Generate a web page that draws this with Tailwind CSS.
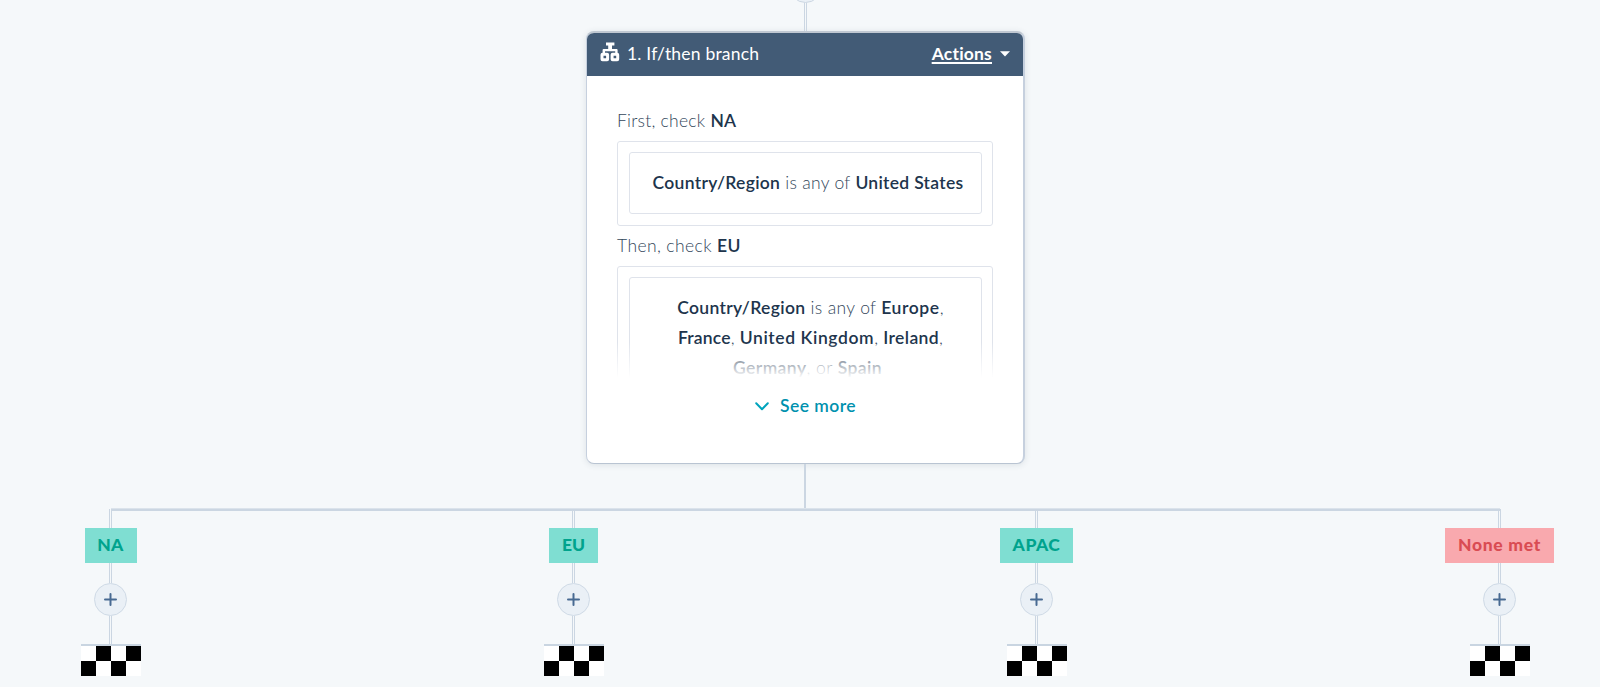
<!DOCTYPE html>
<html lang="en">
<head>
    <meta charset="UTF-8">
    <meta name="viewport" content="width=device-width, initial-scale=1.0">
    <title>Workflow</title>
    <script src="https://cdn.jsdelivr.net/npm/@tailwindcss/browser@4"></script>
</head>
<body class="bg-[#f5f8fa] h-[687px] overflow-hidden font-['Lato',sans-serif] text-[17.5px] leading-[30px] text-[#33475b]">

    <!-- connector from the previous step -->
    <div class="relative h-[31px]">
        <div class="absolute left-[789px] -top-[30px] w-[33px] h-[33px] rounded-full bg-[#eaf0f6] border border-[#cbd6e2]"></div>
        <div class="ml-[804px] pt-[3px] h-full w-[3px]">
            <div class="h-full border-x border-[#cbd6e2]"></div>
        </div>
    </div>

    <!-- if/then card -->
    <div class="ml-[586px] w-[439px] h-[433px] bg-white border border-t-2 border-r-2 border-[#c6d0de] border-b-[#b9c4d2] border-t-[#c0c8d2] rounded-[8px] overflow-hidden shadow-[0_1px_6px_rgba(45,62,80,0.12)]">
        <div class="flex items-start h-[43px] bg-[#425b76] text-white leading-[42px] pl-[13px] pr-[13px]">
            <svg class="w-5 h-5 mt-[9px]" viewBox="0 0 20 20" fill="none">
                <path d="M6 .6h8.400v3H12V7h4.600q1 0 1 1v3h-2.400V9.200H5V11H2.600V8q0-1 1-1h4.600V3.600H6z" fill="#fff"/>
                <rect x="2" y="12.200" width="5.600" height="5.600" rx=".5" stroke="#fff" stroke-width="3"/>
                <rect x="12.100" y="12.200" width="5.600" height="5.600" rx=".5" stroke="#fff" stroke-width="3"/>
            </svg>
            <span class="ml-[7px] tracking-[0.2px]">1. If/then branch</span>
            <a href="#" class="ml-auto font-bold underline decoration-2 underline-offset-[2px] tracking-[0.2px]">Actions</a>
            <svg class="w-[10px] h-[6px] ml-[8px] mt-[18px]" viewBox="0 0 10 6"><path d="M0 .3h10L5 5.500z" fill="#fff"/></svg>
        </div>

        <div class="relative h-[302px] pl-[30px] pt-[30px] pr-[30px] overflow-hidden">
            <div class="h-[30px] font-light tracking-[0.25px]">First, check <b class="font-semibold text-[#20344c]">NA</b></div>
            <div class="mt-[5px] h-[85px] w-[376px] border border-[#dfe3eb] rounded-[3px] pt-[10px] pl-[11px] pr-[10px]">
                <div class="h-[62px] border border-[#dfe3eb] rounded-[3px] pt-[15px] pl-[5px] text-center font-light whitespace-nowrap tracking-[0.3px]">
                    <b class="font-semibold text-[#20344c]">Country/Region</b> is any of <b class="font-semibold text-[#20344c]">United States</b>
                </div>
            </div>
            <div class="mt-[5px] h-[30px] font-light tracking-[0.4px]">Then, check <b class="font-semibold text-[#20344c]">EU</b></div>
            <div class="mt-[5px] h-[140px] w-[376px] border border-[#dfe3eb] rounded-[3px] pt-[10px] pl-[11px] pr-[10px]">
                <div class="h-[130px] border border-[#dfe3eb] rounded-[3px] pt-[15px] text-center font-light whitespace-nowrap">
                    <div class="pl-[10px] tracking-[0.35px]"><b class="font-semibold text-[#20344c]">Country/Region</b> is any of <b class="font-semibold text-[#20344c] tracking-[0.6px]">Europe</b>,</div>
                    <div class="pl-[10px] tracking-[0.2px]"><b class="font-semibold text-[#20344c]">France</b>, <b class="font-semibold text-[#20344c] tracking-[0.6px]">United Kingdom</b>, <b class="font-semibold text-[#20344c] tracking-[0.4px]">Ireland</b>,</div>
                    <div class="pl-[4px] tracking-[0.45px]"><b class="font-semibold text-[#20344c]">Germany</b>, or <b class="font-semibold text-[#20344c]">Spain</b></div>
                </div>
            </div>
            <div class="absolute inset-x-0 bottom-0 h-[36px] bg-linear-to-b from-white/0 to-white"></div>
        </div>

        <div class="flex items-center h-[30px] mt-[13px] pl-[168px] text-[#0091ae] font-semibold tracking-[0.45px]">
            <svg class="w-[14px] h-[9px]" viewBox="0 0 14 9" fill="none"><path d="M1.200 1.300 7 7.200l5.800-5.900" stroke="#00a4bd" stroke-width="2" stroke-linecap="round" stroke-linejoin="round"/></svg>
            <span class="ml-[11px]">See more</span>
        </div>
    </div>

    <!-- trunk and crossbar -->
    <div class="ml-[804px] w-[2px] h-[44px] bg-[#cbd6e2]"></div>
    <div class="ml-[111px] w-[1389px] h-[3px] -mb-[2px] bg-[#cbd6e2] border-t border-[#dbe3eb]"></div>

    <!-- branches -->
    <div class="flex">
        <div class="w-[221px] mr-[121px] flex flex-col items-center">
            <div class="w-[3px] h-[19px] border-x border-[#cbd6e2]"></div>
            <div class="h-[35px] w-[52px] bg-[#7fded2] text-[#00a38d] font-black leading-[33px] text-center tracking-[0.4px]">NA</div>
            <div class="w-[3px] h-[20px] border-x border-[#cbd6e2]"></div>
            <div class="size-[33px] rounded-full bg-[#eaf0f6] border border-[#cfdae6] flex items-center justify-center">
                <svg class="w-[13px] h-[13px]" viewBox="0 0 13 13"><path d="M6.500 1v11M1 6.500h11" stroke="#486a92" stroke-width="2" stroke-linecap="round"/></svg>
            </div>
            <div class="w-[3px] h-[28px] border-x border-[#cbd6e2]"></div>
            <div class="w-[60px] h-[2px] bg-[#c9d5e1] ml-[1px]"></div>
            <div class="grid grid-cols-4 w-[60px] h-[30px] bg-white ml-[1px]">
                <i></i><i class="bg-black"></i><i></i><i class="bg-black"></i>
                <i class="bg-black"></i><i></i><i class="bg-black"></i><i></i>
            </div>
        </div>
        <div class="w-[463px] flex flex-col items-center">
            <div class="w-[3px] h-[19px] border-x border-[#cbd6e2]"></div>
            <div class="h-[35px] w-[49px] bg-[#7fded2] text-[#00a38d] font-black leading-[33px] text-center">EU</div>
            <div class="w-[3px] h-[20px] border-x border-[#cbd6e2]"></div>
            <div class="size-[33px] rounded-full bg-[#eaf0f6] border border-[#cfdae6] flex items-center justify-center">
                <svg class="w-[13px] h-[13px]" viewBox="0 0 13 13"><path d="M6.500 1v11M1 6.500h11" stroke="#486a92" stroke-width="2" stroke-linecap="round"/></svg>
            </div>
            <div class="w-[3px] h-[28px] border-x border-[#cbd6e2]"></div>
            <div class="w-[60px] h-[2px] bg-[#c9d5e1] ml-[1px]"></div>
            <div class="grid grid-cols-4 w-[60px] h-[30px] bg-white ml-[1px]">
                <i></i><i class="bg-black"></i><i></i><i class="bg-black"></i>
                <i class="bg-black"></i><i></i><i class="bg-black"></i><i></i>
            </div>
        </div>
        <div class="w-[463px] flex flex-col items-center">
            <div class="w-[3px] h-[19px] border-x border-[#cbd6e2]"></div>
            <div class="h-[35px] w-[73px] bg-[#7fded2] text-[#00a38d] font-black leading-[33px] text-center tracking-[0.5px]">APAC</div>
            <div class="w-[3px] h-[20px] border-x border-[#cbd6e2]"></div>
            <div class="size-[33px] rounded-full bg-[#eaf0f6] border border-[#cfdae6] flex items-center justify-center">
                <svg class="w-[13px] h-[13px]" viewBox="0 0 13 13"><path d="M6.500 1v11M1 6.500h11" stroke="#486a92" stroke-width="2" stroke-linecap="round"/></svg>
            </div>
            <div class="w-[3px] h-[28px] border-x border-[#cbd6e2]"></div>
            <div class="w-[60px] h-[2px] bg-[#c9d5e1] ml-[1px]"></div>
            <div class="grid grid-cols-4 w-[60px] h-[30px] bg-white ml-[1px]">
                <i></i><i class="bg-black"></i><i></i><i class="bg-black"></i>
                <i class="bg-black"></i><i></i><i class="bg-black"></i><i></i>
            </div>
        </div>
        <div class="w-[201px] ml-[131px] flex flex-col items-center">
            <div class="w-[3px] h-[19px] border-x border-[#cbd6e2]"></div>
            <div class="h-[35px] w-[109px] bg-[#f9a9ae] text-[#d94c53] font-black leading-[33px] text-center tracking-[0.7px]">None met</div>
            <div class="w-[3px] h-[20px] border-x border-[#cbd6e2]"></div>
            <div class="size-[33px] rounded-full bg-[#eaf0f6] border border-[#cfdae6] flex items-center justify-center">
                <svg class="w-[13px] h-[13px]" viewBox="0 0 13 13"><path d="M6.500 1v11M1 6.500h11" stroke="#486a92" stroke-width="2" stroke-linecap="round"/></svg>
            </div>
            <div class="w-[3px] h-[28px] border-x border-[#cbd6e2]"></div>
            <div class="w-[60px] h-[2px] bg-[#c9d5e1] ml-[1px]"></div>
            <div class="grid grid-cols-4 w-[60px] h-[30px] bg-white ml-[1px]">
                <i></i><i class="bg-black"></i><i></i><i class="bg-black"></i>
                <i class="bg-black"></i><i></i><i class="bg-black"></i><i></i>
            </div>
        </div>
    </div>

</body>
</html>
